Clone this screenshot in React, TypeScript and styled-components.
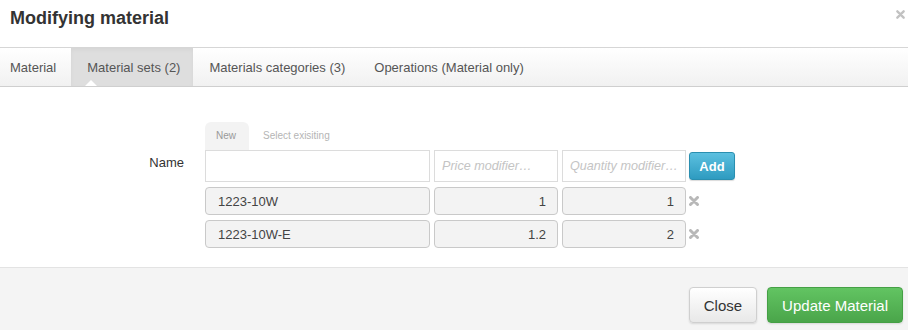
import styled, { createGlobalStyle } from 'styled-components';

const GlobalStyle = createGlobalStyle`
  body {
    margin: 0;
    background: #fff;
    font-family: "Liberation Sans", Arial, sans-serif;
    color: #333;
  }
  * { box-sizing: border-box; }
`;

const Modal = styled.div`
  width: 908px;
  height: 330px;
  overflow: hidden;
  background: #fff;
`;

const Header = styled.header`
  height: 48px;
  padding: 8px 2px 0 10px;
  display: flex;
  justify-content: space-between;
  align-items: flex-start;
  border-bottom: 1px solid #d6d6d6;
`;

const Title = styled.h3`
  margin: 0;
  font-size: 18px;
  font-weight: bold;
  color: #333;
`;

const CloseX = styled.button`
  border: 0;
  background: none;
  padding: 0;
  width: 12px;
  height: 12px;
  display: flex;
  align-items: center;
  justify-content: center;
  cursor: pointer;
`;

const TabBar = styled.nav`
  height: 39px;
  display: flex;
  background: linear-gradient(#ffffff, #f1f1f1);
  border-bottom: 1px solid #cfcfcf;
`;

const Tab = styled.div<{ $active?: boolean; $first?: boolean }>`
  position: relative;
  display: flex;
  align-items: center;
  padding: 0 ${(p) => (p.$first ? '15px' : '13px')} 0 ${(p) => (p.$first ? '10px' : '16px')};
  font-size: 13px;
  color: #555;
  background: ${(p) => (p.$active ? '#dedede' : 'transparent')};
  box-shadow: ${(p) => (p.$active ? 'inset 0 2px 4px rgba(0,0,0,0.04)' : 'none')};

  ${(p) =>
    p.$active &&
    `
    &::after {
      content: "";
      position: absolute;
      left: 14px;
      bottom: 0;
      border-left: 6px solid transparent;
      border-right: 6px solid transparent;
      border-bottom: 6px solid #fff;
    }
  `}
`;

const Body = styled.section`
  padding: 35px 0 19px;
  border-bottom: 1px solid #e3e3e3;
`;

const SubTabs = styled.div`
  display: flex;
  margin-left: 205px;
  height: 28px;
`;

const SubTab = styled.div<{ $active?: boolean }>`
  display: flex;
  align-items: center;
  padding: 0 ${(p) => (p.$active ? '13px' : '13px')} 2px ${(p) => (p.$active ? '11px' : '14px')};
  font-size: 10px;
  color: ${(p) => (p.$active ? '#999' : '#b5b5b5')};
  background: ${(p) => (p.$active ? '#f3f3f3' : 'transparent')};
  border-radius: 6px 6px 0 0;
`;

const FormGrid = styled.div`
  display: grid;
  grid-template-columns: 201px 225px 124px 124px auto;
  grid-auto-rows: 28px;
  grid-template-rows: 32px;
  column-gap: 4px;
  row-gap: 5px;
  align-items: center;
`;

const Label = styled.label`
  justify-self: end;
  padding-right: 17px;
  font-size: 13px;
  color: #333;
  margin-top: -8px;
`;

const Field = styled.div<{ $readonly?: boolean; $align?: 'left' | 'right' }>`
  height: 100%;
  display: flex;
  align-items: center;
  justify-content: ${(p) => (p.$align === 'right' ? 'flex-end' : 'flex-start')};
  padding: ${(p) => (p.$readonly ? '0 11px 0 12px' : '0 1px 0 7px')};
  font-size: 13px;
  color: #444;
  background: ${(p) => (p.$readonly ? '#f3f3f3' : '#fff')};
  border: 1px solid ${(p) => (p.$readonly ? '#c9c9c9' : '#dcdcdc')};
  border-radius: ${(p) => (p.$readonly ? '4px' : '0')};
  white-space: nowrap;
  overflow: hidden;
`;

const Placeholder = styled.span`
  font-style: italic;
  font-size: 12.6px;
  color: #c4c4c4;
  overflow: hidden;
  text-overflow: ellipsis;
`;

const AddButton = styled.button`
  margin-left: -1px;
  width: 46px;
  height: 28px;
  padding: 0;
  border: 1px solid #2a8fb0;
  border-radius: 3px;
  background: linear-gradient(#5cc0e0, #2e9bc0);
  color: #fff;
  font-family: inherit;
  font-size: 13px;
  font-weight: bold;
  box-shadow: 0 1px 1px rgba(0,0,0,0.15);
`;

const RemoveIcon = styled.span`
  display: flex;
  align-items: center;
  margin-left: -1px;
  cursor: pointer;
`;

const Footer = styled.footer`
  background: #f4f4f4;
  height: 80px;
  padding: 19px 5px 0 0;
  display: flex;
  justify-content: flex-end;
  align-items: flex-start;
  gap: 10px;
`;

const FooterButton = styled.button<{ $primary?: boolean }>`
  height: 36px;
  padding: 0 14px;
  font-family: inherit;
  font-size: 15px;
  border-radius: 4px;
  border: 1px solid ${(p) => (p.$primary ? '#45a045' : '#cfcfcf')};
  color: ${(p) => (p.$primary ? '#fff' : '#333')};
  background: ${(p) =>
    p.$primary ? 'linear-gradient(#62c462, #4aa54a)' : 'linear-gradient(#ffffff, #e8e8e8)'};
  box-shadow: 0 1px 2px rgba(0,0,0,0.12);
`;

const Cross = ({ size = 10, color = '#b8b8b8', weight = 2.6 }: { size?: number; color?: string; weight?: number }) => (
  <svg width={size} height={size} viewBox="0 0 10 10">
    <path d="M1.5 1.5 L8.5 8.5 M8.5 1.5 L1.5 8.5" stroke={color} strokeWidth={weight} strokeLinecap="round" />
  </svg>
);

const tabs = ['Material', 'Material sets (2)', 'Materials categories (3)', 'Operations (Material only)'];

const sets = [
  { name: '1223-10W', price: '1', qty: '1' },
  { name: '1223-10W-E', price: '1.2', qty: '2' },
];

export default function App() {
  return (
    <Modal>
      <GlobalStyle />
      <Header>
        <Title>Modifying material</Title>
        <CloseX aria-label="close">
          <Cross size={9} color="#c2c2c2" />
        </CloseX>
      </Header>
      <TabBar>
        {tabs.map((t, i) => (
          <Tab key={t} $first={i === 0} $active={i === 1}>
            {t}
          </Tab>
        ))}
      </TabBar>
      <Body>
        <SubTabs>
          <SubTab $active>New</SubTab>
          <SubTab>Select exisiting</SubTab>
        </SubTabs>
        <FormGrid>
          <Label>Name</Label>
          <Field />
          <Field>
            <Placeholder>Price modifier…</Placeholder>
          </Field>
          <Field>
            <Placeholder>Quantity modifier…</Placeholder>
          </Field>
          <AddButton>Add</AddButton>
          {sets.map((s) => (
            <>
              <span key={s.name + '-l'} />
              <Field key={s.name} $readonly>
                {s.name}
              </Field>
              <Field key={s.name + '-p'} $readonly $align="right">
                {s.price}
              </Field>
              <Field key={s.name + '-q'} $readonly $align="right">
                {s.qty}
              </Field>
              <RemoveIcon key={s.name + '-x'}>
                <Cross weight={3} />
              </RemoveIcon>
            </>
          ))}
        </FormGrid>
      </Body>
      <Footer>
        <FooterButton>Close</FooterButton>
        <FooterButton $primary>Update Material</FooterButton>
      </Footer>
    </Modal>
  );
}
